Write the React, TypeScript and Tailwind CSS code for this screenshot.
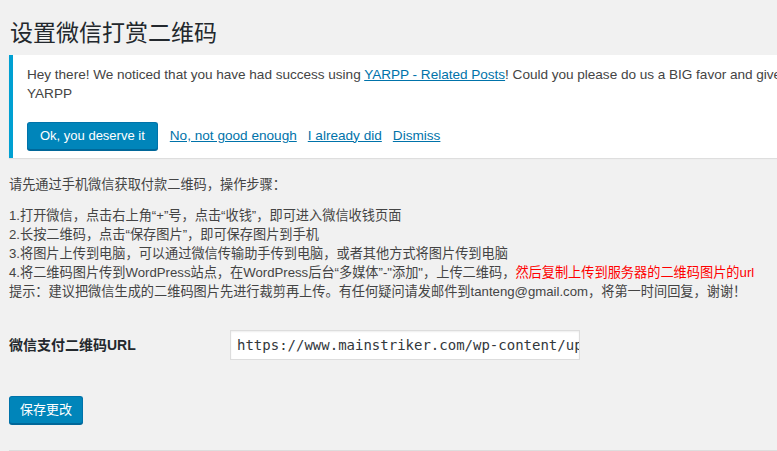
export default function App() {
  const font = { fontFamily: '"Liberation Sans", "Noto Sans CJK SC", sans-serif' }
  return (
    <div className="w-[777px] h-[451px] overflow-hidden bg-[#f1f1f1] text-[#444]" style={font}>
      <div className="w-[1100px] pl-[9px] pr-[20px]">
        <h1 className="pl-px pt-[17px] text-[23px] leading-[32px] text-[#23282d] font-normal">设置微信打赏二维码</h1>

        <div className="mt-[6px] bg-white border-l-4 border-[#00a0d2] shadow-[0_1px_1px_rgba(0,0,0,0.08)] pl-[14px] pt-[10px] pb-[8px] text-[13.6px]">
          <div className="leading-[19px] whitespace-nowrap tracking-[-0.03px]">
            Hey there! We noticed that you have had success using{' '}
            <a className="text-[#0073aa] underline">YARPP - Related Posts</a>! Could you please do us a BIG favor and give it a 5-star rating on WordPress? To help us spread the word and boost our motivation.
          </div>
          <div className="leading-[19px]">YARPP</div>
          <div className="mt-[19px] flex items-center gap-[11px]">
            <button className="mr-px h-[28px] px-[12px] rounded-[3px] bg-[#0085ba] border border-[#0073aa] border-b-[#006799] text-white text-[13px] shadow-[0_1px_0_#006799]">
              Ok, you deserve it
            </button>
            <a className="text-[#0073aa] underline">No, not good enough</a>
            <a className="text-[#0073aa] underline">I already did</a>
            <a className="text-[#0073aa] underline">Dismiss</a>
          </div>
        </div>

        <div className="mt-[17px] text-[13.2px] leading-[19px] text-[#444]">
          <p>请先通过手机微信获取付款二维码，操作步骤：</p>
          <p className="mt-[12px]">1.打开微信，点击右上角“+”号，点击“收钱”，即可进入微信收钱页面</p>
          <p>2.长按二维码，点击“保存图片”，即可保存图片到手机</p>
          <p>3.将图片上传到电脑，可以通过微信传输助手传到电脑，或者其他方式将图片传到电脑</p>
          <p>
            4.将二维码图片传到WordPress站点，在WordPress后台“多媒体”-"添加"，上传二维码，
            <span className="text-[#ff0000]">然后复制上传到服务器的二维码图片的url</span>
          </p>
          <p>提示：建议把微信生成的二维码图片先进行裁剪再上传。有任何疑问请发邮件到tanteng@gmail.com，将第一时间回复，谢谢！</p>
        </div>

        <div className="mt-[29px] flex items-center">
          <label className="w-[221px] text-[14px] font-bold text-[#23282d]">微信支付二维码URL</label>
          <div className="w-[350px] h-[30px] bg-white border border-[#ddd] shadow-[inset_0_1px_2px_rgba(0,0,0,0.07)] pl-[6px] flex items-center overflow-hidden">
            <span className="text-[14px] text-[#32373c] whitespace-nowrap" style={{ fontFamily: '"DejaVu Sans Mono", monospace' }}>
              https://www.mainstriker.com/wp-content/up
            </span>
          </div>
        </div>

        <button className="mt-[36px] h-[28px] px-[10px] rounded-[3px] bg-[#0085ba] border border-[#0073aa] border-b-[#006799] text-white text-[13px] shadow-[0_1px_0_#006799]">
          保存更改
        </button>

        <div className="mt-[26px] h-px bg-[#ddd]" />
      </div>
    </div>
  )
}
